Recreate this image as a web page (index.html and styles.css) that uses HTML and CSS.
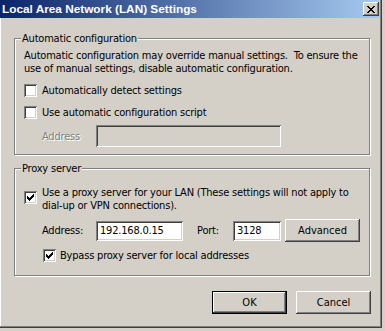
FILE: index.html
```html
<!DOCTYPE html>
<html lang="en">
<head>
    <meta charset="UTF-8">
    <title>Local Area Network (LAN) Settings</title>
    <link rel="stylesheet" href="styles.css">
</head>
<body>
    <div class="dialog">
        <div class="titlebar">
            <span class="title">Local Area Network (LAN) Settings</span>
            <button class="close">
                <svg width="8" height="7" viewBox="0 0 8 7" shape-rendering="crispEdges">
                    <path d="M0 0h2v1H0z M6 0h2v1H6z M1 1h2v1H1z M5 1h2v1H5z M2 2h4v1H2z M3 3h2v1H3z M2 4h4v1H2z M1 5h2v1H1z M5 5h2v1H5z M0 6h2v1H0z M6 6h2v1H6z" fill="#000"/>
                </svg>
            </button>
        </div>
        <div class="client">
            <div class="group auto-group">
                <div class="legend">Automatic configuration</div>
                <p class="desc">Automatic configuration may override manual settings.&nbsp; To ensure the<br>use of manual settings, disable automatic configuration.</p>
                <div class="check-row first">
                    <span class="check"></span>
                    <span>Automatically detect settings</span>
                </div>
                <div class="check-row">
                    <span class="check"></span>
                    <span>Use automatic configuration script</span>
                </div>
                <div class="field-row">
                    <span class="field-label disabled">Address</span>
                    <span class="field disabled wide"></span>
                </div>
            </div>

            <div class="group proxy-group">
                <div class="legend">Proxy server</div>
                <div class="check-row proxy-check">
                    <span class="check checked">
                        <svg width="13" height="13" viewBox="0 0 13 13" shape-rendering="crispEdges">
                            <path d="M3 5h1v3H3z M4 6h1v3H4z M5 7h1v3H5z M6 6h1v3H6z M7 5h1v3H7z M8 4h1v3H8z M9 3h1v3H9z" fill="#000"/>
                        </svg>
                    </span>
                    <span>Use a proxy server for your LAN (These settings will not apply to<br>dial-up or VPN connections).</span>
                </div>
                <div class="field-row proxy-row">
                    <span class="field-label">Address:</span>
                    <span class="field address">192.168.0.15</span>
                    <span class="port-label">Port:</span>
                    <span class="field port">3128</span>
                    <button class="btn advanced">Advanced</button>
                </div>
                <div class="check-row bypass">
                    <span class="check checked">
                        <svg width="13" height="13" viewBox="0 0 13 13" shape-rendering="crispEdges">
                            <path d="M3 5h1v3H3z M4 6h1v3H4z M5 7h1v3H5z M6 6h1v3H6z M7 5h1v3H7z M8 4h1v3H8z M9 3h1v3H9z" fill="#000"/>
                        </svg>
                    </span>
                    <span>Bypass proxy server for local addresses</span>
                </div>
            </div>

            <div class="buttons">
                <button class="btn default">OK</button>
                <button class="btn">Cancel</button>
            </div>
        </div>
    </div>
</body>
</html>
```

FILE: styles.css
```css
/* Classic dialog look */
* {
    box-sizing: border-box;
    margin: 0;
    padding: 0;
}
body {
    background: #d4d0c8;
    font-family: "DejaVu Sans Condensed", "Liberation Sans", sans-serif;
    font-size: 11px;
    line-height: 13px;
    letter-spacing: -0.2px;
    color: #000;
    width: 385px;
    height: 331px;
    overflow: hidden;
}

/* Window frame */
.dialog {
    width: 382px;
    height: 328px;
    background: #d4d0c8;
    box-shadow: inset -1px -1px #404040, inset -2px -2px #808080, inset 1px 0 #fff;
}

/* Title bar */
.titlebar {
    display: flex;
    align-items: center;
    width: 380px;
    height: 18px;
    background: linear-gradient(to right, #0a246a, #a6caf0);
}
.title {
    color: #fff;
    font-family: "Liberation Sans", sans-serif;
    font-size: 11.8px;
    font-weight: bold;
    letter-spacing: 0;
    padding-left: 2px;
    padding-top: 1px;
}
.close {
    display: flex;
    align-items: center;
    justify-content: center;
    margin-left: auto;
    margin-right: 1px;
    width: 16px;
    height: 14px;
    border: none;
    background: #d4d0c8;
    box-shadow: inset -1px -1px #404040, inset 1px 1px #fff, inset -2px -2px #808080;
}

/* Client area */
.client {
    padding-left: 14px;
}

/* Group boxes */
.group {
    width: 356px;
    border: 1px solid #808080;
    box-shadow: inset 1px 1px #fff, 1px 1px #fff;
    padding: 0 0 0 9px;
}
.auto-group {
    margin-top: 20px;
    padding-bottom: 7px;
}
.proxy-group {
    margin-top: 13px;
    padding-bottom: 13px;
}
.legend {
    width: fit-content;
    margin: -7px 0 0 -3px;
    padding: 0 1px;
    background: #d4d0c8;
}
.desc {
    margin-top: 4px;
    white-space: nowrap;
}

/* Checkboxes */
.check-row {
    display: flex;
    align-items: flex-start;
    gap: 5px;
    margin-top: 9px;
    white-space: nowrap;
}
.check {
    flex: none;
    width: 13px;
    height: 13px;
    background: #fff;
    box-shadow: inset 1px 1px #808080, inset -1px -1px #fff, inset 2px 2px #404040, inset -2px -2px #d4d0c8;
}
.check svg {
    display: block;
}
.proxy-check {
    margin-top: 11px;
}
.proxy-check .check {
    margin-top: 5px;
}
.bypass {
    margin-top: 7px;
    margin-left: 19px;
    gap: 4px;
}

/* Text fields */
.field-row {
    display: flex;
    align-items: center;
    margin-top: 6px;
    padding-left: 18px;
}
.field-label {
    width: 54px;
}
.disabled {
    color: #808080;
    text-shadow: 1px 1px #fff;
}
.field {
    height: 22px;
    padding: 4px 0 0 4px;
    background: #fff;
    box-shadow: inset 1px 1px #808080, inset -1px -1px #fff, inset 2px 2px #404040, inset -2px -2px #d4d0c8;
    white-space: nowrap;
}
.field.disabled {
    background: #d4d0c8;
}
.wide {
    width: 185px;
}
.proxy-row {
    margin-top: 7px;
    height: 23px;
}
.proxy-row .field {
    height: 20px;
    padding-top: 3px;
}
.address {
    width: 87px;
}
.port-label {
    margin-left: 14px;
    width: 36px;
}
.port {
    width: 48px;
}

/* Buttons */
.btn {
    width: 75px;
    height: 23px;
    border: none;
    background: #d4d0c8;
    font: inherit;
    color: #000;
    box-shadow: inset -1px -1px #404040, inset 1px 1px #fff, inset -2px -2px #808080;
}
.btn.default {
    box-shadow: inset 0 0 0 1px #000, inset -2px -2px #404040, inset 2px 2px #fff, inset -3px -3px #808080;
}
.advanced {
    margin-left: 4px;
}
.buttons {
    display: flex;
    justify-content: flex-end;
    gap: 9px;
    width: 357px;
    margin-top: 15px;
}
```
